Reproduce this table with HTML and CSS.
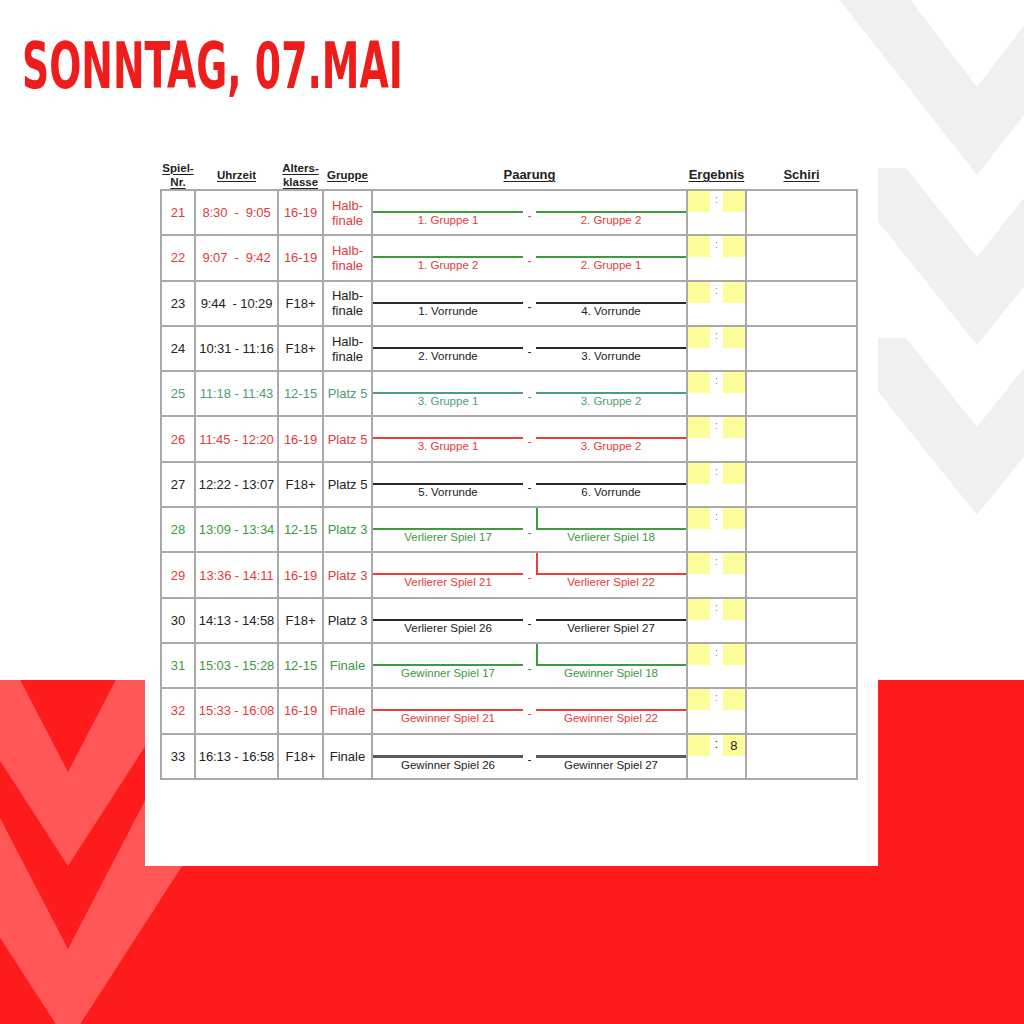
FILE: index.html
```html
<!DOCTYPE html>
<html lang="de">
<head>
<meta charset="utf-8">
<title>Sonntag, 07.Mai</title>
<link rel="stylesheet" href="styles.css">
</head>
<body>
<svg class="deco" width="1024" height="1024" viewBox="0 0 1024 1024" aria-hidden="true">
  <defs>
    <clipPath id="redclip"><rect x="0" y="680" width="1024" height="344"/></clipPath>
  </defs>
  <g fill="#f2f0ef">
    <polygon points="838,-2 909,-2 977,87 1045,-2 1116,-2 977,175"/>
    <polygon points="835,168 906,168 977,257 1048,168 1119,168 977,345"/>
    <polygon points="835,338 906,338 977,427 1048,338 1119,338 977,515"/>
  </g>
  <g fill="#ff5757" clip-path="url(#redclip)">
    <polygon points="-400,140 -260,140 68,772 396,140 536,140 68,866"/>
    <polygon points="-400,317 -260,317 68,949 396,317 536,317 68,1043"/>
  </g>
</svg>

<h1 class="title">SONNTAG, 07.MAI</h1>

<main class="panel">
  <table class="plan">
    <colgroup>
      <col class="c-nr"><col class="c-time"><col class="c-age"><col class="c-grp"><col class="c-pair"><col class="c-res"><col class="c-ref">
    </colgroup>
    <thead>
      <tr>
        <th><u>Spiel-<br>Nr.</u></th>
        <th><u>Uhrzeit</u></th>
        <th><u>Alters-<br>klasse</u></th>
        <th><u>Gruppe</u></th>
        <th class="big"><u>Paarung</u></th>
        <th class="big"><u>Ergebnis</u></th>
        <th class="big"><u>Schiri</u></th>
      </tr>
    </thead>
    <tbody>
      <tr class="red gline">
        <td>21</td><td class="time">8:30  -  9:05</td><td>16-19</td><td class="grp">Halb-<br>finale</td>
        <td class="pair"><div class="pair-in"><div class="side"><span class="up"></span><span class="ln"></span><span class="nm">1. Gruppe 1</span></div><span class="dash">-</span><div class="side"><span class="up"></span><span class="ln"></span><span class="nm">2. Gruppe 2</span></div></div></td>
        <td class="res"><div class="res-in"><span class="box"></span><span class="colon">:</span><span class="box"></span></div></td><td></td>
      </tr>
      <tr class="red gline">
        <td>22</td><td class="time">9:07  -  9:42</td><td>16-19</td><td class="grp">Halb-<br>finale</td>
        <td class="pair"><div class="pair-in"><div class="side"><span class="up"></span><span class="ln"></span><span class="nm">1. Gruppe 2</span></div><span class="dash">-</span><div class="side"><span class="up"></span><span class="ln"></span><span class="nm">2. Gruppe 1</span></div></div></td>
        <td class="res"><div class="res-in"><span class="box"></span><span class="colon">:</span><span class="box"></span></div></td><td></td>
      </tr>
      <tr class="black">
        <td>23</td><td class="time">9:44  - 10:29</td><td>F18+</td><td class="grp">Halb-<br>finale</td>
        <td class="pair"><div class="pair-in"><div class="side"><span class="up"></span><span class="ln"></span><span class="nm">1. Vorrunde</span></div><span class="dash">-</span><div class="side"><span class="up"></span><span class="ln"></span><span class="nm">4. Vorrunde</span></div></div></td>
        <td class="res"><div class="res-in"><span class="box"></span><span class="colon">:</span><span class="box"></span></div></td><td></td>
      </tr>
      <tr class="black">
        <td>24</td><td class="time">10:31 - 11:16</td><td>F18+</td><td class="grp">Halb-<br>finale</td>
        <td class="pair"><div class="pair-in"><div class="side"><span class="up"></span><span class="ln"></span><span class="nm">2. Vorrunde</span></div><span class="dash">-</span><div class="side"><span class="up"></span><span class="ln"></span><span class="nm">3. Vorrunde</span></div></div></td>
        <td class="res"><div class="res-in"><span class="box"></span><span class="colon">:</span><span class="box"></span></div></td><td></td>
      </tr>
      <tr class="teal">
        <td>25</td><td class="time">11:18 - 11:43</td><td>12-15</td><td class="grp">Platz 5</td>
        <td class="pair"><div class="pair-in"><div class="side"><span class="up"></span><span class="ln"></span><span class="nm">3. Gruppe 1</span></div><span class="dash">-</span><div class="side"><span class="up"></span><span class="ln"></span><span class="nm">3. Gruppe 2</span></div></div></td>
        <td class="res"><div class="res-in"><span class="box"></span><span class="colon">:</span><span class="box"></span></div></td><td></td>
      </tr>
      <tr class="red">
        <td>26</td><td class="time">11:45 - 12:20</td><td>16-19</td><td class="grp">Platz 5</td>
        <td class="pair"><div class="pair-in"><div class="side"><span class="up"></span><span class="ln"></span><span class="nm">3. Gruppe 1</span></div><span class="dash">-</span><div class="side"><span class="up"></span><span class="ln"></span><span class="nm">3. Gruppe 2</span></div></div></td>
        <td class="res"><div class="res-in"><span class="box"></span><span class="colon">:</span><span class="box"></span></div></td><td></td>
      </tr>
      <tr class="black">
        <td>27</td><td class="time">12:22 - 13:07</td><td>F18+</td><td class="grp">Platz 5</td>
        <td class="pair"><div class="pair-in"><div class="side"><span class="up"></span><span class="ln"></span><span class="nm">5. Vorrunde</span></div><span class="dash">-</span><div class="side"><span class="up"></span><span class="ln"></span><span class="nm">6. Vorrunde</span></div></div></td>
        <td class="res"><div class="res-in"><span class="box"></span><span class="colon">:</span><span class="box"></span></div></td><td></td>
      </tr>
      <tr class="green">
        <td>28</td><td class="time">13:09 - 13:34</td><td>12-15</td><td class="grp">Platz 3</td>
        <td class="pair"><div class="pair-in"><div class="side"><span class="up"></span><span class="ln"></span><span class="nm">Verlierer Spiel 17</span></div><span class="dash">-</span><div class="side tick"><span class="up"></span><span class="ln"></span><span class="nm">Verlierer Spiel 18</span></div></div></td>
        <td class="res"><div class="res-in"><span class="box"></span><span class="colon">:</span><span class="box"></span></div></td><td></td>
      </tr>
      <tr class="red">
        <td>29</td><td class="time">13:36 - 14:11</td><td>16-19</td><td class="grp">Platz 3</td>
        <td class="pair"><div class="pair-in"><div class="side"><span class="up"></span><span class="ln"></span><span class="nm">Verlierer Spiel 21</span></div><span class="dash">-</span><div class="side tick"><span class="up"></span><span class="ln"></span><span class="nm">Verlierer Spiel 22</span></div></div></td>
        <td class="res"><div class="res-in"><span class="box"></span><span class="colon">:</span><span class="box"></span></div></td><td></td>
      </tr>
      <tr class="black">
        <td>30</td><td class="time">14:13 - 14:58</td><td>F18+</td><td class="grp">Platz 3</td>
        <td class="pair"><div class="pair-in"><div class="side"><span class="up"></span><span class="ln"></span><span class="nm">Verlierer Spiel 26</span></div><span class="dash">-</span><div class="side"><span class="up"></span><span class="ln"></span><span class="nm">Verlierer Spiel 27</span></div></div></td>
        <td class="res"><div class="res-in"><span class="box"></span><span class="colon">:</span><span class="box"></span></div></td><td></td>
      </tr>
      <tr class="green">
        <td>31</td><td class="time">15:03 - 15:28</td><td>12-15</td><td class="grp">Finale</td>
        <td class="pair"><div class="pair-in"><div class="side"><span class="up"></span><span class="ln"></span><span class="nm">Gewinner Spiel 17</span></div><span class="dash">-</span><div class="side tick"><span class="up"></span><span class="ln"></span><span class="nm">Gewinner Spiel 18</span></div></div></td>
        <td class="res"><div class="res-in"><span class="box"></span><span class="colon">:</span><span class="box"></span></div></td><td></td>
      </tr>
      <tr class="red">
        <td>32</td><td class="time">15:33 - 16:08</td><td>16-19</td><td class="grp">Finale</td>
        <td class="pair"><div class="pair-in"><div class="side"><span class="up"></span><span class="ln"></span><span class="nm">Gewinner Spiel 21</span></div><span class="dash">-</span><div class="side"><span class="up"></span><span class="ln"></span><span class="nm">Gewinner Spiel 22</span></div></div></td>
        <td class="res"><div class="res-in"><span class="box"></span><span class="colon">:</span><span class="box"></span></div></td><td></td>
      </tr>
      <tr class="black thick">
        <td>33</td><td class="time">16:13 - 16:58</td><td>F18+</td><td class="grp">Finale</td>
        <td class="pair"><div class="pair-in"><div class="side"><span class="up"></span><span class="ln"></span><span class="nm">Gewinner Spiel 26</span></div><span class="dash">-</span><div class="side"><span class="up"></span><span class="ln"></span><span class="nm">Gewinner Spiel 27</span></div></div></td>
        <td class="res"><div class="res-in"><span class="box"></span><span class="colon">:</span><span class="box">8</span></div></td><td></td>
      </tr>
    </tbody>
  </table>
</main>
</body>
</html>
```
FILE: styles.css
```css
html, body {
  margin: 0;
  padding: 0;
}

body {
  width: 1024px;
  height: 1024px;
  overflow: hidden;
  position: relative;
  background: linear-gradient(#ffffff 0, #ffffff 680px, #fe1b1b 680px, #fe1b1b 100%);
  font-family: "Liberation Sans", Arial, sans-serif;
}

.deco {
  position: absolute;
  left: 0;
  top: 0;
  z-index: 0;
}

.title {
  position: relative;
  z-index: 1;
  margin: 34px 0 0 22px;
  font-family: "DejaVu Sans Condensed", "DejaVu Sans", sans-serif;
  font-weight: bold;
  font-size: 42px;
  line-height: 42px;
  height: 42px;
  color: #ef1c1c;
  letter-spacing: 0;
  transform: scaleY(1.53);
  transform-origin: 0 0;
  white-space: nowrap;
}

.panel {
  position: relative;
  z-index: 1;
  display: block;
  margin: 44px 0 0 145px;
  width: 733px;
  height: 746px;
  box-sizing: border-box;
  padding: 38px 0 0 15px;
  background: #ffffff;
}

.plan {
  border-collapse: collapse;
  table-layout: fixed;
  width: 696px;
  font-size: 13px;
  color: #222;
}

.c-nr { width: 34px; }
.c-time { width: 83px; }
.c-age { width: 45px; }
.c-grp { width: 49px; }
.c-pair { width: 315px; }
.c-res { width: 59px; }
.c-ref { width: 111px; }

.plan thead tr {
  height: 32px;
}

.plan th {
  padding: 2px 0 0;
  font-size: 11.5px;
  font-weight: bold;
  line-height: 14px;
  vertical-align: middle;
  color: #222;
  text-align: center;
}

.plan th.big {
  font-size: 13px;
  padding-top: 3px;
}

.plan th u {
  text-decoration-thickness: 1px;
  text-underline-offset: 2px;
}

.plan tbody tr {
  height: 45.3px;
}

.plan td {
  border: 2px solid #a9a9a9;
  padding: 0;
  text-align: center;
  vertical-align: middle;
  line-height: 15px;
  color: var(--txt);
}

.plan td.time {
  white-space: pre;
  letter-spacing: -0.1px;
}

.plan td.grp {
  line-height: 15px;
}

.red { --txt: #e23a3e; --line: #ee3b3b; }
.green { --txt: #3b9a3e; --line: #3e9a3e; }
.teal { --txt: #4c9e76; --line: #4c9e76; }
.black { --txt: #222222; --line: #2a2a2a; }
.gline { --line: #3e9a3e; }
.thick { --line: #5a5a5a; }

.plan td.pair {
  vertical-align: top;
}

.pair-in {
  display: flex;
  align-items: flex-start;
}

.side {
  width: 151px;
  display: flex;
  flex-direction: column;
}

.up {
  display: block;
  height: 20px;
}

.tick .up {
  border-left: 2px solid var(--line);
}

.ln {
  display: block;
  height: 2px;
  background: var(--line);
}

.thick .ln {
  height: 3px;
}

.nm {
  display: block;
  font-size: 11.5px;
  line-height: 13px;
  margin-top: 1px;
  text-align: center;
}

.dash {
  width: 13px;
  font-size: 12px;
  line-height: 12px;
  padding-top: 19px;
  text-align: center;
}

.plan td.res {
  vertical-align: top;
}

.res-in {
  display: flex;
  align-items: flex-start;
}

.box {
  width: 23px;
  height: 21px;
  background: #fdfd9c;
  font-size: 13px;
  line-height: 21px;
  color: #222;
}

.colon {
  width: 13px;
  font-size: 10px;
  line-height: 18px;
  color: #777;
}

.thick .colon {
  color: #222;
  font-size: 12px;
}
```
